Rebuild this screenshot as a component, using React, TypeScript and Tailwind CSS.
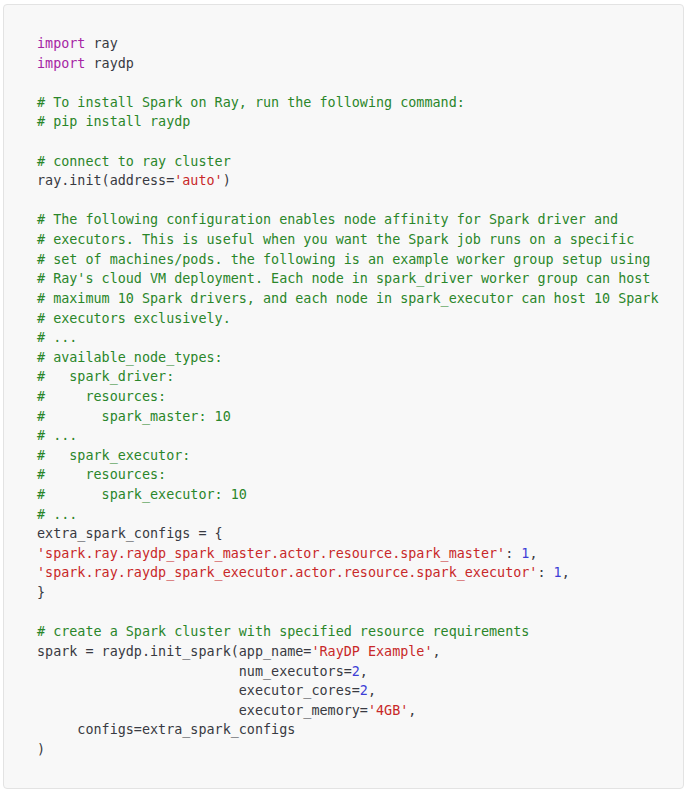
import React from "react";

type Tok = [string, string];

const K = "text-[#a626a4]";
const C = "text-[#2a862a]";
const S = "text-[#c82829]";
const N = "text-[#3d3dd6]";
const D = "";

const lines: Tok[][] = [
  [[K, "import"], [D, " ray"]],
  [[K, "import"], [D, " raydp"]],
  [],
  [[C, "# To install Spark on Ray, run the following command:"]],
  [[C, "# pip install raydp"]],
  [],
  [[C, "# connect to ray cluster"]],
  [[D, "ray.init(address="], [S, "'auto'"], [D, ")"]],
  [],
  [[C, "# The following configuration enables node affinity for Spark driver and"]],
  [[C, "# executors. This is useful when you want the Spark job runs on a specific"]],
  [[C, "# set of machines/pods. the following is an example worker group setup using"]],
  [[C, "# Ray's cloud VM deployment. Each node in spark_driver worker group can host"]],
  [[C, "# maximum 10 Spark drivers, and each node in spark_executor can host 10 Spark"]],
  [[C, "# executors exclusively."]],
  [[C, "# ..."]],
  [[C, "# available_node_types:"]],
  [[C, "#   spark_driver:"]],
  [[C, "#     resources:"]],
  [[C, "#       spark_master: 10"]],
  [[C, "# ..."]],
  [[C, "#   spark_executor:"]],
  [[C, "#     resources:"]],
  [[C, "#       spark_executor: 10"]],
  [[C, "# ..."]],
  [[D, "extra_spark_configs = {"]],
  [[S, "'spark.ray.raydp_spark_master.actor.resource.spark_master'"], [D, ": "], [N, "1"], [D, ","]],
  [[S, "'spark.ray.raydp_spark_executor.actor.resource.spark_executor'"], [D, ": "], [N, "1"], [D, ","]],
  [[D, "}"]],
  [],
  [[C, "# create a Spark cluster with specified resource requirements"]],
  [[D, "spark = raydp.init_spark(app_name="], [S, "'RayDP Example'"], [D, ","]],
  [[D, "                         num_executors="], [N, "2"], [D, ","]],
  [[D, "                         executor_cores="], [N, "2"], [D, ","]],
  [[D, "                         executor_memory="], [S, "'4GB'"], [D, ","]],
  [[D, "     configs=extra_spark_configs"]],
  [[D, ")"]],
];

export default function App() {
  return (
    <div className="w-[687px] h-[793px] bg-white pt-[4px] pl-[3px]">
      <div className="w-[681px] h-[785px] bg-[#f8f8f8] border border-[#e3e3e3] rounded-[4px] pl-[33px] pt-[29px]">
        <pre
          className="text-[13.42px] leading-[19.62px] text-[#383a42] whitespace-pre m-0"
          style={{ fontFamily: '"DejaVu Sans Mono", "Liberation Mono", monospace' }}
        >
          {lines.map((ln, i) => (
            <div key={i} className="h-[19.62px]">
              {ln.length === 0
                ? "\u00a0"
                : ln.map((t, j) => (
                    <span key={j} className={t[0]}>
                      {t[1]}
                    </span>
                  ))}
            </div>
          ))}
        </pre>
      </div>
    </div>
  );
}
